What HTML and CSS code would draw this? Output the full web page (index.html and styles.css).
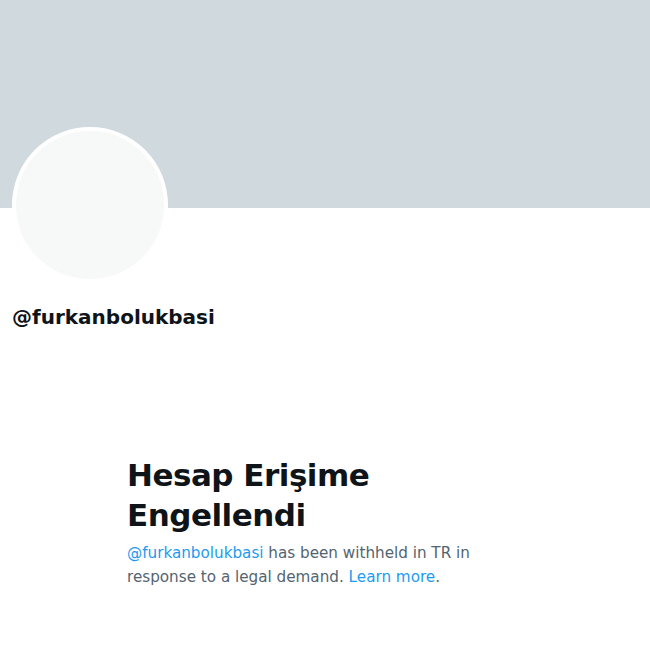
FILE: index.html
```html
<!DOCTYPE html>
<html>
<head>
<meta charset="utf-8">
<link rel="stylesheet" href="styles.css">
</head>
<body>
<div class="page">
  <div class="banner"></div>
  <div class="profile">
    <div class="avatar"></div>
    <div class="handle">@furkanbolukbasi</div>
  </div>
  <div class="empty">
    <h1 class="title">Hesap Erişime Engellendi</h1>
    <p class="desc"><span class="link">@furkanbolukbasi</span> has been withheld in TR in response to a legal demand. <span class="link">Learn more</span>.</p>
  </div>
</div>
</body>
</html>
```
FILE: styles.css
```css
html, body { margin: 0; padding: 0; background: #fff; }
body { font-family: "DejaVu Sans", "Liberation Sans", Arial, sans-serif; color: #0f1419; }
.page { width: 650px; }
.banner { height: 208px; background: #cfd9de; }
.profile { padding: 0 12px; }
.avatar {
  width: 148px; height: 148px; border-radius: 50%;
  background: #f7f9f9; border: 4px solid #fff;
  margin-top: -81px;
}
.handle {
  margin-top: 22px;
  font-size: 20px; font-weight: 700; line-height: 24px;
}
.empty {
  width: 396px; margin: 126px auto 0;
}
.title {
  margin: 0; font-size: 31px; line-height: 40px; font-weight: 700;
  letter-spacing: -0.5px;
}
.desc {
  margin: 6px 0 0; font-size: 15.2px; line-height: 24px; color: #536471;
}
.link { color: #1d9bf0; }
```
